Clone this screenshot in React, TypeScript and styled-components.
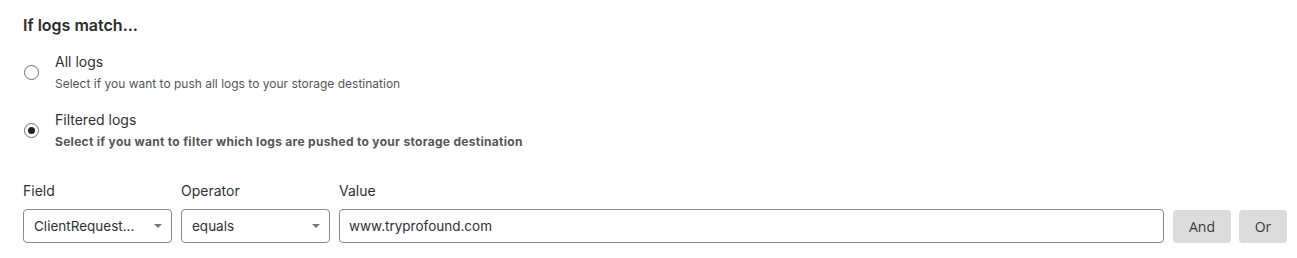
import styled, { createGlobalStyle } from 'styled-components';

const GlobalStyle = createGlobalStyle`
  body {
    margin: 0;
    background: #ffffff;
    font-family: Inter, "Noto Sans", sans-serif;
    color: #313131;
  }
`;

const Container = styled.div`
  width: 1297px;
  height: 258px;
  box-sizing: border-box;
  padding: 15px 10px 0 23px;

  display: flex;
  flex-direction: column;
`;

const Heading = styled.h3`
  margin: 0;
  font-size: 16px;
  line-height: 20px;
  font-weight: 600;
  color: #2b2b2b;
`;

const RadioList = styled.div`
  display: flex;
  flex-direction: column;
  gap: 18px;
  margin-top: 17px;
`;

const RadioRow = styled.label`
  display: flex;
  align-items: center;
  gap: 16px;
  cursor: pointer;
`;

const RadioCircle = styled.span<{ checked?: boolean }>`
  width: 15px;
  height: 15px;
  box-sizing: border-box;
  border-radius: 50%;
  border: 1px solid #6f6f6f;
  background: #ffffff;
  flex-shrink: 0;
  margin-left: 1px;
  margin-top: 1px;

  display: flex;
  align-items: center;
  justify-content: center;

  &::after {
    content: '';
    width: 7px;
    height: 7px;
    border-radius: 50%;
    background: #222222;
    display: ${({ checked }) => (checked ? 'block' : 'none')};
  }
`;

const RadioText = styled.div`
  display: flex;
  flex-direction: column;
  gap: 4px;
`;

const RadioTitle = styled.span`
  font-size: 14px;
  line-height: 20px;
  color: #313131;
`;

const RadioDescription = styled.span<{ strong?: boolean }>`
  font-size: 12px;
  line-height: 16px;
  color: #555555;
  font-weight: ${({ strong }) => (strong ? 700 : 400)};
  letter-spacing: ${({ strong }) => (strong ? '0.3px' : 'normal')};
`;

const FilterRow = styled.div`
  display: flex;
  align-items: flex-end;
  gap: 9px;
  margin-top: 32px;
`;

const FieldGroup = styled.div<{ width?: number; grow?: boolean }>`
  display: flex;
  flex-direction: column;
  gap: 9px;
  width: ${({ width }) => (width ? `${width}px` : 'auto')};
  flex: ${({ grow }) => (grow ? 1 : 'none')};
`;

const FieldLabel = styled.span`
  font-size: 14px;
  line-height: 18px;
  color: #313131;
`;

const SelectBox = styled.div`
  height: 34px;
  box-sizing: border-box;
  border: 1px solid #8a8a8a;
  border-radius: 4px;
  padding: 0 9px 0 10px;

  display: flex;
  align-items: center;
  justify-content: space-between;

  font-size: 13.5px;
  color: #313131;
`;

const SelectValue = styled.span`
  white-space: nowrap;
  overflow: hidden;
  text-overflow: ellipsis;
`;

const Caret = styled.span`
  width: 0;
  height: 0;
  border-left: 4px solid transparent;
  border-right: 4px solid transparent;
  border-top: 4px solid #777777;
  flex-shrink: 0;
`;

const TextInput = styled.div`
  height: 34px;
  box-sizing: border-box;
  border: 1px solid #8a8a8a;
  border-radius: 4px;
  padding: 0 9px;

  display: flex;
  align-items: center;

  font-size: 13.5px;
  color: #313131;
`;

const ButtonGroup = styled.div`
  display: flex;
  gap: 8px;
`;

const ActionButton = styled.button<{ width: number }>`
  width: ${({ width }) => width}px;
  height: 33px;
  border: none;
  border-radius: 4px;
  background: #dcdcdc;
  color: #3a3a3a;
  font-family: "Open Sans", "Noto Sans", sans-serif;
  font-size: 14px;
  cursor: pointer;
`;

function App() {
  return (
    <>
      <GlobalStyle />
      <Container>
        <Heading>If logs match...</Heading>
        <RadioList>
          <RadioRow>
            <RadioCircle />
            <RadioText>
              <RadioTitle>All logs</RadioTitle>
              <RadioDescription>Select if you want to push all logs to your storage destination</RadioDescription>
            </RadioText>
          </RadioRow>
          <RadioRow>
            <RadioCircle checked />
            <RadioText>
              <RadioTitle>Filtered logs</RadioTitle>
              <RadioDescription strong>
                Select if you want to filter which logs are pushed to your storage destination
              </RadioDescription>
            </RadioText>
          </RadioRow>
        </RadioList>
        <FilterRow>
          <FieldGroup width={149}>
            <FieldLabel>Field</FieldLabel>
            <SelectBox>
              <SelectValue>ClientRequest...</SelectValue>
              <Caret />
            </SelectBox>
          </FieldGroup>
          <FieldGroup width={149}>
            <FieldLabel>Operator</FieldLabel>
            <SelectBox>
              <SelectValue>equals</SelectValue>
              <Caret />
            </SelectBox>
          </FieldGroup>
          <FieldGroup grow>
            <FieldLabel>Value</FieldLabel>
            <TextInput>www.tryprofound.com</TextInput>
          </FieldGroup>
          <ButtonGroup>
            <ActionButton width={58}>And</ActionButton>
            <ActionButton width={48}>Or</ActionButton>
          </ButtonGroup>
        </FilterRow>
      </Container>
    </>
  );
}

export default App;
